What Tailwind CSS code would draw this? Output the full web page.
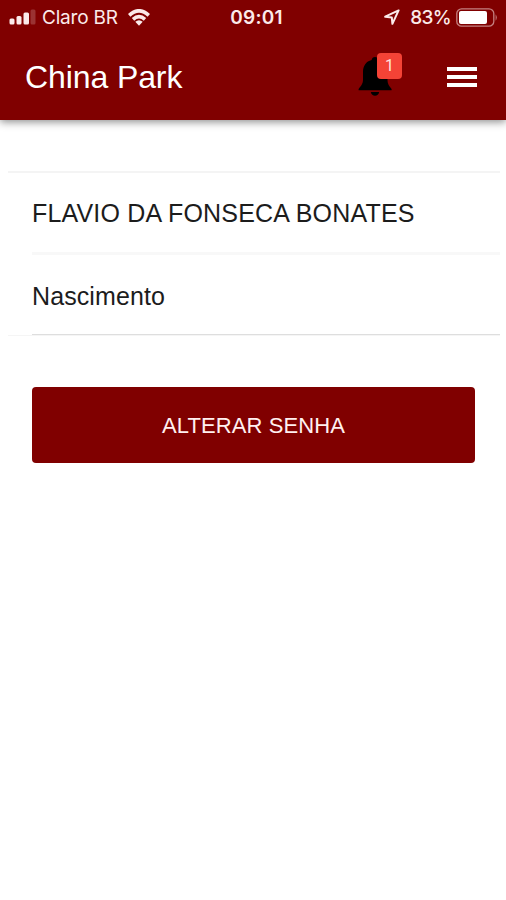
<!DOCTYPE html>
<html lang="pt-BR">
  <head>
    <meta charset="UTF-8" />
    <meta name="viewport" content="width=device-width, initial-scale=1.0" />
    <title>China Park</title>
    <script src="https://cdn.jsdelivr.net/npm/@tailwindcss/browser@4"></script>
  </head>
  <body
    class="bg-white min-h-screen overflow-hidden font-['Liberation_Sans',sans-serif] text-[#1c1c1c]"
  >
    <header class="h-[120px] bg-[#800000] text-white shadow-[0_2px_8px_rgba(0,0,0,0.45)]">
      <!-- status bar -->
      <div
        class="h-[34px] pl-[9px] pr-2 grid grid-cols-3 items-center font-[Inter,sans-serif] text-[19px] leading-none text-[#fbeaea]"
      >
        <div class="flex items-center whitespace-nowrap">
          <svg class="w-[27px] h-4 shrink-0" viewBox="0 0 27 16" fill="currentColor">
            <rect x="0.5" y="9.5" width="5" height="6" rx="1.5" />
            <rect x="7.5" y="7" width="5" height="8.5" rx="1.5" />
            <rect x="14.5" y="3.5" width="5.5" height="12" rx="1.5" />
            <rect x="21.5" y="0.5" width="5" height="15" rx="1.5" opacity="0.22" />
          </svg>
          <span class="ml-[6px] tracking-[-0.2px]">Claro BR</span>
          <svg class="ml-[10px] w-[22px] h-[17px] shrink-0" viewBox="0 0 22 17">
            <g fill="none" stroke="currentColor" stroke-width="3.6">
              <path d="M1.2 6.3Q11-2.7 20.8 6.3" />
              <path d="M5 10.4Q11 5 17 10.4" />
            </g>
            <path d="M7.3 12.7Q11 9.6 14.7 12.7L11 16.7Z" fill="currentColor" />
          </svg>
        </div>
        <div class="text-center pl-[6px] font-semibold tracking-[0.2px]">09:01</div>
        <div class="flex items-center justify-end">
          <svg class="w-4 h-4" viewBox="0 0 16 16" fill="none" stroke="currentColor" stroke-width="2" stroke-linejoin="round">
            <path d="M14.6 1.4L1.2 7.7L7.8 8.4L8.4 14.8Z" />
          </svg>
          <span class="ml-[10px] tracking-[-0.7px] font-medium">83%</span>
          <svg class="ml-[5px] w-[42px] h-[19px] shrink-0" viewBox="0 0 42 19">
            <rect x="0.8" y="0.8" width="37" height="17.4" rx="4.8" fill="none" stroke="currentColor" stroke-width="1.3" opacity="0.55" />
            <rect x="3" y="3" width="28" height="13" rx="2" fill="white" />
            <path d="M39.6 6.2Q42 9.5 39.6 12.8Z" fill="currentColor" opacity="0.55" />
          </svg>
        </div>
      </div>

      <!-- toolbar -->
      <div class="h-[86px] pl-[25px] pr-[29px] flex items-center">
        <h1 class="text-[32px] leading-none tracking-[-0.1px]">China Park</h1>
        <button class="relative ml-auto w-[34px] h-[40px]">
          <svg class="w-full h-full" viewBox="0 0 34 40" fill="black">
            <path d="M17 0C19 0 20 1 20.4 3C26 4.4 29.5 9 29.5 15V22.5C29.5 27 31 28.5 33.6 32V33.2H0.6V32C3 28.5 5 27 5 22.5V15C5 9 8 4.4 13.6 3C14 1 15 0 17 0Z" />
            <path d="M12.8 35H21.2Q20.3 38.8 17 38.8Q13.7 38.8 12.8 35Z" />
          </svg>
          <span
            class="absolute left-[19px] -top-[4px] w-[25px] h-[26px] rounded-[4px] bg-[#f44336] font-[Roboto,sans-serif] text-[16px] leading-[26px] text-center text-[#ffe2df]"
            >1</span
          >
        </button>
        <button class="ml-[55px] w-[30px] flex flex-col gap-1">
          <span class="h-1 bg-white"></span>
          <span class="h-1 bg-white"></span>
          <span class="h-1 bg-white"></span>
        </button>
      </div>
    </header>

    <main>
      <ul class="mt-[51px] ml-2 mr-[6px] border-t-2 border-[#f4f4f4] text-[25px] leading-none">
        <li class="ml-6 h-[82px] pt-px flex items-center border-b-3 border-[#f8f8f8]">
          <span class="whitespace-nowrap tracking-[0.17px]">FLAVIO DA FONSECA BONATES</span>
        </li>
        <li class="ml-6 h-[80px] pt-[3px] flex items-center border-b border-[#dedede]">
          <span class="tracking-[0.1px]">Nascimento</span>
        </li>
        <li class="h-px bg-[#f5f5f5]"></li>
      </ul>

      <div class="pt-[51px] pl-8 pr-[31px]">
        <button
          class="w-full h-[76px] pt-[2px] rounded-[4px] bg-[#800000] text-[22px] leading-none tracking-[0.1px] text-[#fff0f0]"
        >
          ALTERAR SENHA
        </button>
      </div>
    </main>
  </body>
</html>
